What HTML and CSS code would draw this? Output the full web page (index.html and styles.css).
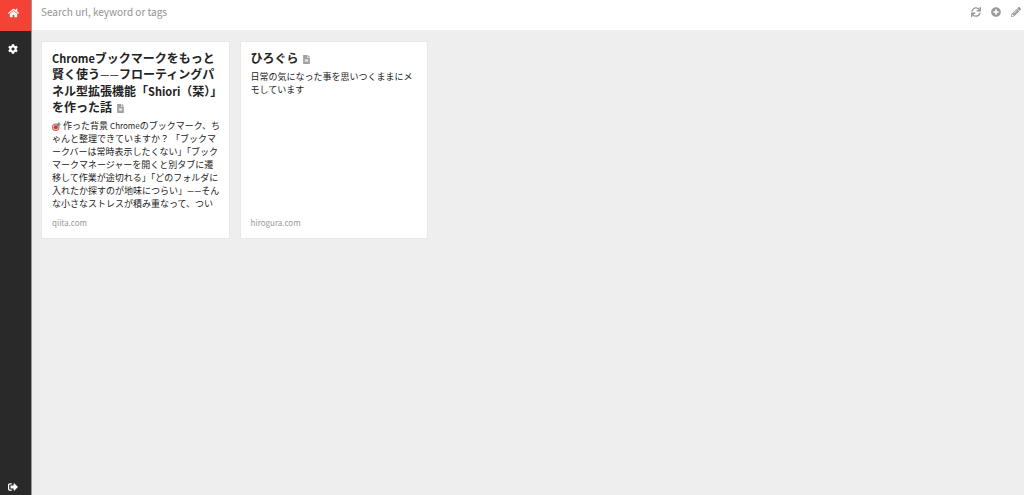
FILE: index.html
```html
<!DOCTYPE html>
<html lang="ja">
<head>
<meta charset="utf-8">
<title>Bookmarks</title>
<meta name="viewport" content="width=device-width, initial-scale=1">
<link rel="stylesheet" href="styles.css">
</head>
<body>
<div class="app">
  <nav class="sidebar" aria-label="Main">
    <a class="nav-link nav-link-active" href="#home" aria-label="Home">
      <svg class="icon icon-home" viewBox="0 0 576 512"><path d="M280.4 148.3L96 300.1V464a16 16 0 0 0 16 16l112-.3a16 16 0 0 0 16-16V368a16 16 0 0 1 16-16h64a16 16 0 0 1 16 16v95.6a16 16 0 0 0 16 16.1l112 .3a16 16 0 0 0 16-16V300L295.7 148.3a12.2 12.2 0 0 0-15.3 0zM571.6 251.5L488 182.6V44.1a12 12 0 0 0-12-12h-56a12 12 0 0 0-12 12v72.6L318.5 43a48 48 0 0 0-61 0L4.3 251.5a12 12 0 0 0-1.6 16.9l25.5 31a12 12 0 0 0 16.9 1.6l235.3-193.7a12.2 12.2 0 0 1 15.3 0L530.9 301a12 12 0 0 0 16.9-1.6l25.5-31a12 12 0 0 0-1.7-16.9z"/></svg>
    </a>
    <a class="nav-link" href="#settings" aria-label="Settings">
      <svg class="icon" viewBox="0 0 512 512"><path d="M487.4 315.7l-42.6-24.6c4.3-23.2 4.3-47 0-70.2l42.6-24.6c4.9-2.8 7.1-8.6 5.5-14-11.1-35.6-30-67.8-54.7-94.6-3.8-4.1-10-5.1-14.8-2.3L380.8 110c-17.9-15.4-38.5-27.3-60.8-35.1V25.8c0-5.6-3.9-10.5-9.4-11.7-36.7-8.2-74.3-7.8-109.2 0-5.5 1.2-9.4 6.1-9.4 11.7V75c-22.2 7.9-42.8 19.8-60.8 35.1L88.7 85.5c-4.9-2.8-11-1.9-14.8 2.3-24.7 26.7-43.6 58.9-54.7 94.6-1.7 5.4.6 11.2 5.5 14L67.3 221c-4.3 23.2-4.3 47 0 70.2l-42.6 24.6c-4.9 2.8-7.1 8.6-5.5 14 11.1 35.6 30 67.8 54.7 94.6 3.8 4.1 10 5.1 14.8 2.3l42.6-24.6c17.9 15.4 38.5 27.3 60.8 35.1v49.2c0 5.6 3.9 10.5 9.4 11.7 36.7 8.2 74.3 7.8 109.2 0 5.5-1.2 9.4-6.1 9.4-11.7v-49.2c22.2-7.9 42.8-19.8 60.8-35.1l42.6 24.6c4.9 2.8 11 1.9 14.8-2.3 24.7-26.7 43.6-58.9 54.7-94.6 1.5-5.500-.7-11.3-5.600-14.100zM256 336c-44.100 0-80-35.900-80-80s35.900-80 80-80 80 35.900 80 80-35.900 80-80 80z"/></svg>
    </a>
    <a class="nav-link nav-link-logout" href="#logout" aria-label="Log out">
      <svg class="icon" viewBox="0 0 512 512"><path d="M497 273L329 441c-15 15-41 4.500-41-17v-96H152c-13.300 0-24-10.700-24-24v-96c0-13.300 10.700-24 24-24h136V88c0-21.400 25.900-32 41-17l168 168c9.300 9.400 9.300 24.600 0 34zM192 436v-40c0-6.600-5.400-12-12-12H96c-17.700 0-32-14.300-32-32V160c0-17.700 14.300-32 32-32h84c6.600 0 12-5.400 12-12V76c0-6.600-5.400-12-12-12H96c-53 0-96 43-96 96v192c0 53 43 96 96 96h84c6.600 0 12-5.400 12-12z"/></svg>
    </a>
  </nav>
  <div class="content">
    <header class="toolbar">
      <input class="search" type="text" placeholder="Search url, keyword or tags" aria-label="Search url, keyword or tags">
      <button class="tool" type="button" aria-label="Refresh">
        <svg class="icon" viewBox="0 0 512 512"><path d="M440.65 12.57l4 82.77A247.16 247.16 0 0 0 255.83 8C134.73 8 33.91 94.92 12.29 209.82A12 12 0 0 0 24.09 224h49.05a12 12 0 0 0 11.67-9.26 175.91 175.91 0 0 1 317-56.94l-101.46-4.86a12 12 0 0 0-12.57 12v47.41a12 12 0 0 0 12 12H500a12 12 0 0 0 12-12V12a12 12 0 0 0-12-12h-47.37a12 12 0 0 0-11.98 12.57zM255.83 432a175.61 175.61 0 0 1-146-77.8l101.8 4.87a12 12 0 0 0 12.57-12v-47.4a12 12 0 0 0-12-12H12a12 12 0 0 0-12 12V500a12 12 0 0 0 12 12h47.35a12 12 0 0 0 12-12.6l-4.15-82.57A247.17 247.17 0 0 0 255.83 504c121.11 0 221.93-86.92 243.55-201.82a12 12 0 0 0-11.8-14.18h-49.05a12 12 0 0 0-11.67 9.26A175.86 175.86 0 0 1 255.83 432z"/></svg>
      </button>
      <button class="tool" type="button" aria-label="Add bookmark">
        <svg class="icon" viewBox="0 0 512 512"><path d="M256 8C119 8 8 119 8 256s111 248 248 248 248-111 248-248S393 8 256 8zm144 276c0 6.600-5.400 12-12 12h-92v92c0 6.600-5.400 12-12 12h-56c-6.600 0-12-5.400-12-12v-92h-92c-6.600 0-12-5.400-12-12v-56c0-6.600 5.400-12 12-12h92v-92c0-6.600 5.400-12 12-12h56c6.600 0 12 5.400 12 12v92h92c6.600 0 12 5.400 12 12v56z"/></svg>
      </button>
      <button class="tool" type="button" aria-label="Edit">
        <svg class="icon" viewBox="0 0 512 512"><path d="M497.900 142.100l-46.100 46.100c-4.700 4.700-12.300 4.700-17 0l-111-111c-4.700-4.700-4.700-12.300 0-17l46.100-46.100c18.700-18.700 49.100-18.700 67.900 0l60.100 60.100c18.800 18.700 18.800 49.100 0 67.900zM284.200 99.800L21.600 362.400.4 483.900c-2.900 16.400 11.400 30.600 27.800 27.800l121.500-21.300 262.600-262.600c4.700-4.700 4.700-12.300 0-17l-111-111c-4.800-4.700-12.400-4.700-17.100 0zM124.100 339.900c-5.500-5.500-5.500-14.300 0-19.800l154-154c5.500-5.500 14.300-5.500 19.800 0s5.500 14.300 0 19.800l-154 154c-5.500 5.500-14.300 5.500-19.800 0zM88 424h48v36.300l-64.500 11.300-31.100-31.100L51.700 376H88v48z"/></svg>
      </button>
    </header>
    <main class="grid">
      <article class="card">
        <h2 class="title"><span class="title-latin">Chrome</span>ブックマークをもっと<br>賢く使う<span class="dash">——</span>フローティングパ<br>ネル型拡張機能「<span class="title-latin">Shiori</span>（栞）」<br>を作った話 <svg class="icon-doc" viewBox="0 0 384 512"><path d="M224 136V0H24C10.700 0 0 10.700 0 24v464c0 13.300 10.700 24 24 24h336c13.300 0 24-10.700 24-24V160H248c-13.200 0-24-10.800-24-24zm64 236c0 6.600-5.400 12-12 12H108c-6.600 0-12-5.400-12-12v-8c0-6.600 5.400-12 12-12h168c6.600 0 12 5.400 12 12v8zm0-64c0 6.600-5.400 12-12 12H108c-6.600 0-12-5.400-12-12v-8c0-6.600 5.400-12 12-12h168c6.600 0 12 5.400 12 12v8zm0-72v8c0 6.600-5.400 12-12 12H108c-6.600 0-12-5.400-12-12v-8c0-6.600 5.400-12 12-12h168c6.600 0 12 5.400 12 12zm96-114v6H256V0h6c6.400 0 12.500 2.500 17 7l98 98c4.500 4.500 7 10.600 7 17z"/></svg></h2>
        <p class="excerpt"><svg class="icon-dart" viewBox="0 0 18 18"><circle cx="7.500" cy="10.500" r="7.500" fill="#d0605b"/><circle cx="7.500" cy="10.500" r="5.500" fill="#f0cfcd"/><circle cx="7.500" cy="10.500" r="4" fill="#cc3a35"/><path d="M7.500 10.500L14 4" stroke="#555" stroke-width="1.500"/><path d="M11 7V3l3-3 1 3 3 1-3 3z" fill="#3d9aa6"/></svg> 作った背景 <span class="text-latin">Chrome</span>のブックマーク、ち<br>ゃんと整理できていますか？ 「ブックマ<br>ークバーは常時表示したくない」「ブック<br>マークマネージャーを開くと別タブに遷<br>移して作業が途切れる」「どのフォルダに<br>入れたか探すのが地味につらい」<span class="dash">——</span>そん<br>な小さなストレスが積み重なって、つい</p>
        <a class="domain" href="#qiita">qiita.com</a>
      </article>
      <article class="card">
        <h2 class="title">ひろぐら <svg class="icon-doc" viewBox="0 0 384 512"><path d="M224 136V0H24C10.700 0 0 10.700 0 24v464c0 13.300 10.700 24 24 24h336c13.300 0 24-10.700 24-24V160H248c-13.200 0-24-10.800-24-24zm64 236c0 6.600-5.400 12-12 12H108c-6.600 0-12-5.400-12-12v-8c0-6.600 5.400-12 12-12h168c6.600 0 12 5.400 12 12v8zm0-64c0 6.600-5.400 12-12 12H108c-6.600 0-12-5.400-12-12v-8c0-6.600 5.400-12 12-12h168c6.600 0 12 5.400 12 12v8zm0-72v8c0 6.600-5.400 12-12 12H108c-6.600 0-12-5.400-12-12v-8c0-6.600 5.400-12 12-12h168c6.600 0 12 5.400 12 12zm96-114v6H256V0h6c6.400 0 12.500 2.500 17 7l98 98c4.500 4.500 7 10.600 7 17z"/></svg></h2>
        <p class="excerpt">日常の気になった事を思いつくままにメ<br>モしています</p>
        <a class="domain" href="#hirogura">hirogura.com</a>
      </article>
    </main>
  </div>
</div>
</body>
</html>
```
FILE: styles.css
```css
* {
  box-sizing: border-box;
}

body {
  margin: 0;
  background: #eee;
  color: #232323;
  font-family: "Noto Sans CJK JP", sans-serif;
}

.app {
  display: flex;
  min-height: 100vh;
}

.sidebar {
  display: flex;
  flex: none;
  flex-direction: column;
  width: 32px;
  background: #292929;
  border-right: 1px solid #999;
}

.nav-link {
  display: flex;
  align-items: center;
  height: 36px;
  padding-left: 8px;
  color: #fff;
}

.nav-link-active {
  height: 31px;
  padding-bottom: 6px;
  background: #f44336;
}

.nav-link-logout {
  height: 16px;
  margin-top: auto;
}

.icon {
  display: block;
  width: 10px;
  height: 10px;
  fill: currentColor;
}

.icon-home {
  width: 11px;
}

.content {
  flex: 1;
  min-width: 0;
}

.toolbar {
  display: flex;
  gap: 10px;
  height: 30px;
  padding: 0 3px 6px 9px;
  background: #fff;
}

.search {
  flex: 1;
  min-width: 0;
  padding: 0 0 2px;
  border: 0;
  outline: 0;
  background: none;
  color: #232323;
  font: 10px "Noto Sans CJK JP", sans-serif;
}

.search::placeholder {
  color: #929292;
  opacity: 1;
}

.tool {
  padding: 0;
  border: 0;
  background: none;
  color: #999;
}

.grid {
  display: grid;
  grid-template-columns: repeat(auto-fill, minmax(180px, 1fr));
  gap: 10px;
  padding: 11px 0 11px 9px;
}

.card {
  display: flex;
  flex-direction: column;
  height: 198px;
  padding: 8px 10px 9px;
  background: #fff;
  border: 1px solid #e8e8e8;
  white-space: nowrap;
}

.title {
  margin: 0 0 4px;
  font-size: 12px;
  font-weight: 700;
  line-height: 16px;
}

.title-latin {
  font-size: 11px;
}

.text-latin {
  font-size: 8px;
}

.dash {
  font-family: Lato, sans-serif;
  font-weight: 400;
}

.icon-doc {
  width: 7px;
  height: 9px;
  margin-left: 2px;
  fill: #a0a0a0;
  vertical-align: -1px;
}

.excerpt {
  margin: 0;
  font-size: 9px;
  line-height: 13px;
}

.icon-dart {
  width: 9px;
  height: 9px;
  vertical-align: -2px;
}

.domain {
  margin-top: auto;
  color: #999;
  font-size: 8px;
  line-height: 13px;
  text-decoration: none;
}
```
